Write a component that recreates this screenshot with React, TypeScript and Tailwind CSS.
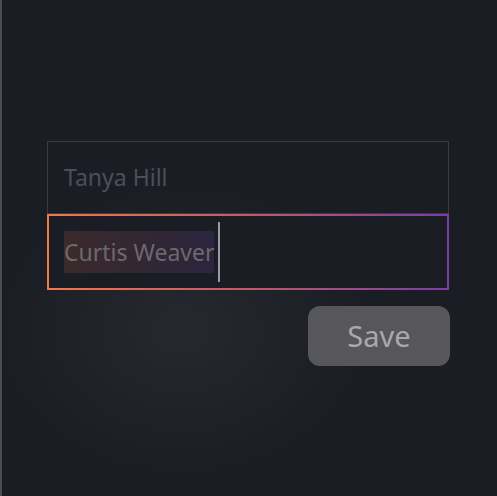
export default function App() {
  return (
    <div
      className="w-[497px] h-[496px] bg-[#1b1d24] border-l-2 border-[#4b4d55] relative overflow-hidden"
      style={{ fontFamily: '"Noto Sans", Inter, sans-serif' }}
    >
      <div className="absolute inset-0 bg-[radial-gradient(ellipse_190px_150px_at_180px_330px,rgba(255,255,255,0.05),transparent)]" />
      <div className="relative pt-[141px] pl-[45px] w-[447px] flex flex-col">
        <div className="h-[73px] border border-[#393b43] flex items-center pl-[16px]">
          <span className="text-[23px] text-[#4c4f58]">Tanya Hill</span>
        </div>
        <div className="h-[76px] p-[2px] bg-[linear-gradient(90deg,#f4774a,#c05a6a_50%,#7b3ca8)]">
          <div className="h-full bg-[#1b1d24] flex items-center pl-[15px]">
            <span className="text-[23px] text-[#6c696d] leading-[42px] bg-[linear-gradient(90deg,#3a2a2b,#2e2538_80%,#2c2540)]">Curtis Weaver</span>
            <span className="w-[2px] h-[60px] bg-[#9a9ba1] ml-[4px]" />
          </div>
        </div>
        <div className="flex justify-end mt-[16px] -mr-[1px]">
          <button className="w-[142px] h-[60px] rounded-[12px] bg-[#57565a] text-[#a9a8ab] text-[29px]">
            Save
          </button>
        </div>
      </div>
    </div>
  );
}
